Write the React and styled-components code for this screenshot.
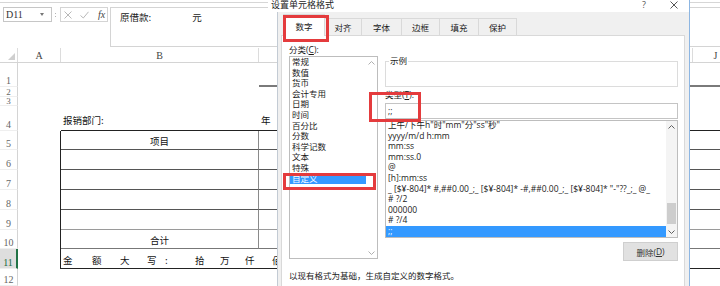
import React from 'react';
import styled, { createGlobalStyle } from 'styled-components';

const GlobalStyle = createGlobalStyle`
  html, body { margin: 0; padding: 0; background: #ffffff; }
  body { font-family: "Noto Sans CJK SC", "Noto Sans", sans-serif; }
  *, *::before, *::after { box-sizing: border-box; }
`;

const Page = styled.div`
  position: relative;
  width: 720px;
  height: 286px;
  overflow: hidden;
  background: #fff;
`;

/* ---------- workbook behind the dialog ---------- */

const Workbook = styled.div`
  display: flex;
  flex-direction: column;
  height: 100%;
`;

const RibbonEdge = styled.div`
  height: 3px;
  border-bottom: 1px solid #d6d6d6;
`;

const FormulaBar = styled.div`
  display: flex;
  align-items: flex-start;
  height: 45px;
  padding: 4px 0 0 3px;
`;

const NameBox = styled.div`
  display: flex;
  align-items: center;
  justify-content: space-between;
  width: 49px;
  height: 15px;
  padding: 0 7px 0 2px;
  border: 1px solid #c6c6c6;
  font-family: "Liberation Serif", serif;
  font-size: 10px;
  color: #333;
`;

const Grip = styled.div`
  display: flex;
  flex-direction: column;
  align-items: center;
  justify-content: center;
  gap: 2px;
  width: 6px;
  height: 15px;
  span { width: 1px; height: 1px; background: #b5b5b5; }
`;

const FxBox = styled.div`
  display: flex;
  align-items: center;
  gap: 8px;
  width: 48px;
  height: 15px;
  margin-left: 2px;
  padding-left: 3px;
  border: 1px solid #d4d4d4;
`;

const FxLabel = styled.span`
  margin-left: 1px;
  font-family: "Liberation Serif", serif;
  font-style: italic;
  font-size: 10px;
  color: #444;
`;

const FormulaInput = styled.div`
  flex: 1;
  height: 40px;
  margin-left: 2px;
  padding: 3px 0 0 9px;
  border: 1px solid #d4d4d4;
  border-right: none;
  font-size: 9.5px;
  line-height: 12px;
  color: #222;
`;

const Unit = styled.span`
  margin-left: 41px;
`;

const HeaderRow = styled.div`
  display: grid;
  grid-template-columns: 18px 43px 198px 434px 46px;
  height: 15px;
  border-bottom: 1px solid #d4d4d4;
  font-family: "Liberation Serif", serif;
  font-size: 10px;
  color: #444;
`;

const ColHead = styled.div`
  display: flex;
  align-items: center;
  justify-content: center;
  border-right: 1px solid #dcdcdc;
`;

const Corner = styled(ColHead)`
  justify-content: flex-end;
  align-items: flex-end;
  padding: 0 2px 2px 0;
`;

const SheetRow = styled.div`
  display: grid;
  grid-template-columns: 18px 43px 198px 1fr;
  height: ${p => p.$h}px;
  overflow: hidden;
  font-size: 9.5px;
  line-height: 12px;
  color: #111;
`;

const RowNum = styled.div`
  display: flex;
  align-items: flex-end;
  justify-content: center;
  overflow: hidden;
  font-family: "Liberation Serif", serif;
  font-size: ${p => (p.$tight ? 9 : 10)}px;
  line-height: ${p => (p.$tight ? 8 : 11)}px;
  color: ${p => (p.$active ? '#1d6a40' : '#666')};
  background: ${p => (p.$active ? '#dedede' : '#fff')};
  border-right: ${p => (p.$active ? '2px solid #217346' : '1px solid #d4d4d4')};
  border-bottom: 1px solid #efefef;
`;

const Blank = styled.div``;

const TitleRule = styled.div`
  border-bottom: 2px solid #7a7a7a;
`;

const CaptionCell = styled.div`
  display: flex;
  align-items: flex-end;
  padding: 0 3px 4px 2px;
  border-bottom: 1px solid #222;
`;

const TableEdge = styled.div`
  border-right: 1px solid #222;
`;

const TableCell = styled.div`
  display: flex;
  align-items: flex-end;
  justify-content: center;
  padding-bottom: 2px;
  border-bottom: 1px solid ${p => p.$tone || '#555'};
  border-right: ${p => (p.$divider ? '1px solid #8a8a8a' : 'none')};
`;

const AmountCell = styled.div`
  grid-column: span 2;
  display: flex;
  align-items: flex-end;
  padding: 0 0 2px 2px;
  border-bottom: 1px solid #222;
`;

const AmountChar = styled.span`
  flex: none;
  width: ${p => p.$w}px;
`;

/* ---------- format cells dialog ---------- */

const Dialog = styled.div`
  position: absolute;
  left: 268px;
  top: 0;
  width: 422px;
  height: 286px;
  display: flex;
  flex-direction: column;
  border-right: 1px solid #8db6e2;
  font-family: "Open Sans", "Noto Sans CJK SC", sans-serif;
  font-size: 8.5px;
  color: #1a1a1a;
`;

const TitleBar = styled.div`
  display: flex;
  align-items: flex-start;
  height: 12px;
  padding-left: 3px;
  background: #fff;
  line-height: 9px;
`;

const Title = styled.div`
  flex: 1;
  font-family: "Noto Sans CJK SC", sans-serif;
  font-size: 9px;
  color: #222;
`;

const TitleButton = styled.div`
  display: flex;
  justify-content: center;
  align-items: center;
  width: 30px;
  height: 9px;
  font-size: 9px;
  color: #555;
`;

const Body = styled.div`
  flex: 1;
  display: flex;
  flex-direction: column;
  margin-left: 9px;
  background: #f0f0f0;
  border-left: 1px solid #c3cbd4;
`;

const TabStrip = styled.div`
  display: flex;
  align-items: flex-end;
  height: 23px;
  padding: 3px 0 0 5px;
`;

const Tab = styled.div`
  position: relative;
  z-index: ${p => (p.$active ? 2 : 1)};
  display: flex;
  align-items: center;
  justify-content: center;
  width: ${p => p.$w}px;
  height: ${p => (p.$active ? 22 : 17)}px;
  margin-bottom: ${p => (p.$active ? -1 : 0)}px;
  margin-left: -1px;
  padding-top: ${p => (p.$active ? 1 : 0)}px;
  background: ${p => (p.$active ? '#fff' : '#f0f0f0')};
  border: 1px solid #d9d9d9;
  border-bottom: none;
  &:first-child { margin-left: 0; }
`;

const Panel = styled.div`
  position: relative;
  z-index: 1;
  flex: 1;
  margin: 0 4px 0 3px;
  padding: 7px 6px 0 7px;
  background: #fff;
  border: 1px solid #d9d9d9;
  border-bottom: none;
`;

const Columns = styled.div`
  display: grid;
  grid-template-columns: 89px 293px;
  column-gap: 7px;
`;

const Column = styled.div`
  display: flex;
  flex-direction: column;
`;

const FieldLabel = styled.div`
  line-height: ${p => p.$lh || 13}px;
  margin-top: ${p => p.$mt || 0}px;
  white-space: nowrap;
`;

const ListBox = styled.div`
  display: grid;
  grid-template-columns: 1fr 11px;
  height: ${p => p.$h}px;
  margin-top: ${p => p.$mt || 0}px;
  overflow: hidden;
  border: 1px solid #bdbdbd;
  background: #fff;
`;

const Items = styled.div`
  display: flex;
  flex-direction: column;
  overflow: hidden;
  margin-top: ${p => p.$shift || 0}px;
`;

const Item = styled.div`
  flex: none;
  height: 10.6px;
  line-height: 10.6px;
  padding-left: 2px;
  white-space: nowrap;
  background: ${p => (p.$selected ? '#3399ff' : 'transparent')};
  color: ${p => (p.$selected ? '#fff' : '#1a1a1a')};
`;

const ScrollBar = styled.div`
  display: flex;
  flex-direction: column;
  align-items: center;
  background: ${p => (p.$disabled ? '#fff' : '#f4f4f4')};
`;

const ScrollArrow = styled.div`
  display: flex;
  align-items: center;
  justify-content: center;
  width: 100%;
  height: 11px;
  flex: none;
`;

const ScrollTrack = styled.div`
  flex: 1;
  display: flex;
  flex-direction: column;
  justify-content: flex-end;
  align-items: center;
  width: 100%;
  padding-bottom: 2px;
`;

const Thumb = styled.div`
  width: 9px;
  height: 21px;
  background: #cdcdcd;
`;

const Group = styled.fieldset`
  height: 31px;
  margin: 13px 0 0 0;
  padding: 0 3px;
  border: 1px solid #dcdcdc;
  legend {
    padding: 0 1px;
    line-height: 10px;
    font-size: 8.5px;
  }
`;

const TypeInput = styled.div`
  height: 16px;
  margin-top: 2px;
  padding-left: 2px;
  border: 1px solid #c4c4c4;
  line-height: 14px;
`;

const ButtonRow = styled.div`
  display: flex;
  justify-content: flex-end;
  margin-top: 4px;
`;

const Button = styled.div`
  display: flex;
  align-items: center;
  justify-content: center;
  width: 55px;
  height: 19px;
  background: #e1e1e1;
  border: 1px solid #cfcfcf;
  color: #333;
`;

const Hint = styled.div`
  margin-top: 9px;
  line-height: 11px;
  color: #222;
`;

const RedBox = styled.div`
  position: absolute;
  left: ${p => p.$x}px;
  top: ${p => p.$y}px;
  width: ${p => p.$w}px;
  height: ${p => p.$h}px;
  z-index: 5;
  border: 3px solid #e43b3d;
  pointer-events: none;
`;

/* ---------- small drawings ---------- */

const Chevron = ({ up, color }) => (
  <svg width="7" height="4" viewBox="0 0 7 4">
    <polyline
      points={up ? '0.5,3.5 3.5,0.5 6.5,3.5' : '0.5,0.5 3.5,3.5 6.5,0.5'}
      fill="none"
      stroke={color}
      strokeWidth="1"
    />
  </svg>
);

const DropArrow = () => (
  <svg width="4" height="3" viewBox="0 0 4 3">
    <polygon points="0,0 4,0 2,3" fill="#777" />
  </svg>
);

const Cross = ({ size = 8, color = '#b8b8b8' }) => (
  <svg width={size} height={size} viewBox="0 0 8 8">
    <path d="M0.5 0.5 L7.5 7.5 M7.5 0.5 L0.5 7.5" stroke={color} strokeWidth="1" fill="none" />
  </svg>
);

const Check = () => (
  <svg width="9" height="8" viewBox="0 0 9 8">
    <path d="M0.5 4.5 L3.3 7 L8.5 0.8" stroke="#b8b8b8" strokeWidth="1" fill="none" />
  </svg>
);

const CornerMark = () => (
  <svg width="7" height="7" viewBox="0 0 7 7">
    <polygon points="7,0 7,7 0,7" fill="#cfcfcf" />
  </svg>
);

const tabs = [
  { label: '数字', w: 42, active: true },
  { label: '对齐', w: 38 },
  { label: '字体', w: 41 },
  { label: '边框', w: 39 },
  { label: '填充', w: 40 },
  { label: '保护', w: 39 },
];

const categories = ['常规', '数值', '货币', '会计专用', '日期', '时间', '百分比', '分数', '科学记数', '文本', '特殊', '自定义'];

const formats = [
  '上午/下午h"时"mm"分"ss"秒"',
  'yyyy/m/d h:mm',
  'mm:ss',
  'mm:ss.0',
  '@',
  '[h]:mm:ss',
  '_ [$¥-804]* #,##0.00_;_ [$¥-804]* -#,##0.00_;_ [$¥-804]* "-"??_;_ @_',
  '# ?/2',
  '000000',
  '# ?/4',
  ';;',
];

const amountChars = [
  ['金', 29], ['额', 28], ['大', 27], ['写', 18], [':', 30],
  ['拾', 25], ['万', 25], ['仟', 27], ['佰', 28], ['拾', 28], ['元', 28],
];

const tableRows = [
  { n: 5, h: 19, label: '项目' },
  { n: 6, h: 20 },
  { n: 7, h: 20 },
  { n: 8, h: 20 },
  { n: 9, h: 20, tone: '#9a9a9a' },
  { n: 10, h: 19, label: '合计', tone: '#777' },
];

export default function App() {
  return (
    <Page>
      <GlobalStyle />
      <Workbook>
        <RibbonEdge />
        <FormulaBar>
          <NameBox>
            D11
            <DropArrow />
          </NameBox>
          <Grip><span /><span /></Grip>
          <FxBox>
            <Cross />
            <Check />
            <FxLabel>fx</FxLabel>
          </FxBox>
          <FormulaInput>
            原借款:<Unit>元</Unit>
          </FormulaInput>
        </FormulaBar>

        <HeaderRow>
          <Corner><CornerMark /></Corner>
          <ColHead>A</ColHead>
          <ColHead>B</ColHead>
          <ColHead />
          <ColHead>J</ColHead>
        </HeaderRow>

        <SheetRow $h={24}>
          <RowNum>1</RowNum>
          <Blank />
          <Blank />
          <TitleRule />
        </SheetRow>
        <SheetRow $h={10}>
          <RowNum $tight>2</RowNum>
          <Blank />
          <Blank />
          <Blank />
        </SheetRow>
        <SheetRow $h={9}>
          <RowNum $tight>3</RowNum>
          <Blank />
          <Blank />
          <Blank />
        </SheetRow>
        <SheetRow $h={25}>
          <RowNum>4</RowNum>
          <Blank />
          <CaptionCell>报销部门:</CaptionCell>
          <CaptionCell>年</CaptionCell>
        </SheetRow>
        {tableRows.map(r => (
          <SheetRow key={r.n} $h={r.h}>
            <RowNum>{r.n}</RowNum>
            <TableEdge />
            <TableCell $divider $tone={r.tone}>{r.label}</TableCell>
            <TableCell $tone={r.tone} />
          </SheetRow>
        ))}
        <SheetRow $h={20}>
          <RowNum $active>11</RowNum>
          <TableEdge />
          <AmountCell>
            {amountChars.map(([c, w], i) => (
              <AmountChar key={i} $w={w}>{c}</AmountChar>
            ))}
          </AmountCell>
        </SheetRow>
        <SheetRow $h={17}>
          <RowNum>12</RowNum>
          <Blank />
          <Blank />
          <Blank />
        </SheetRow>
      </Workbook>

      <Dialog>
        <TitleBar>
          <Title>设置单元格格式</Title>
          <TitleButton>?</TitleButton>
          <TitleButton><Cross size={8} color="#555" /></TitleButton>
        </TitleBar>
        <Body>
          <TabStrip>
            {tabs.map(t => (
              <Tab key={t.label} $w={t.w} $active={t.active}>{t.label}</Tab>
            ))}
          </TabStrip>
          <Panel>
            <Columns>
              <Column>
                <FieldLabel>分类(<u>C</u>):</FieldLabel>
                <ListBox $h={203}>
                  <Items>
                    {categories.map(c => (
                      <Item key={c} $selected={c === '自定义'}>{c}</Item>
                    ))}
                  </Items>
                  <ScrollBar $disabled>
                    <ScrollArrow><Chevron up color="#b0b0b0" /></ScrollArrow>
                    <ScrollTrack />
                    <ScrollArrow><Chevron color="#b0b0b0" /></ScrollArrow>
                  </ScrollBar>
                </ListBox>
              </Column>
              <Column>
                <Group>
                  <legend>示例</legend>
                </Group>
                <FieldLabel $lh={12} $mt={2}>类型(<u>T</u>):</FieldLabel>
                <TypeInput>;;</TypeInput>
                <ListBox $h={118} $mt={1}>
                  <Items $shift={-1}>
                    {formats.map(f => (
                      <Item key={f} $selected={f === ';;'}>{f}</Item>
                    ))}
                  </Items>
                  <ScrollBar>
                    <ScrollArrow><Chevron up color="#606060" /></ScrollArrow>
                    <ScrollTrack><Thumb /></ScrollTrack>
                    <ScrollArrow><Chevron color="#606060" /></ScrollArrow>
                  </ScrollBar>
                </ListBox>
                <ButtonRow>
                  <Button>删除(<u>D</u>)</Button>
                </ButtonRow>
              </Column>
            </Columns>
            <Hint>以现有格式为基础，生成自定义的数字格式。</Hint>
          </Panel>
        </Body>
        <RedBox $x={15} $y={15} $w={46} $h={27} />
        <RedBox $x={101} $y={92} $w={52} $h={30} />
        <RedBox $x={15} $y={173} $w={93} $h={17} />
      </Dialog>
    </Page>
  );
}
